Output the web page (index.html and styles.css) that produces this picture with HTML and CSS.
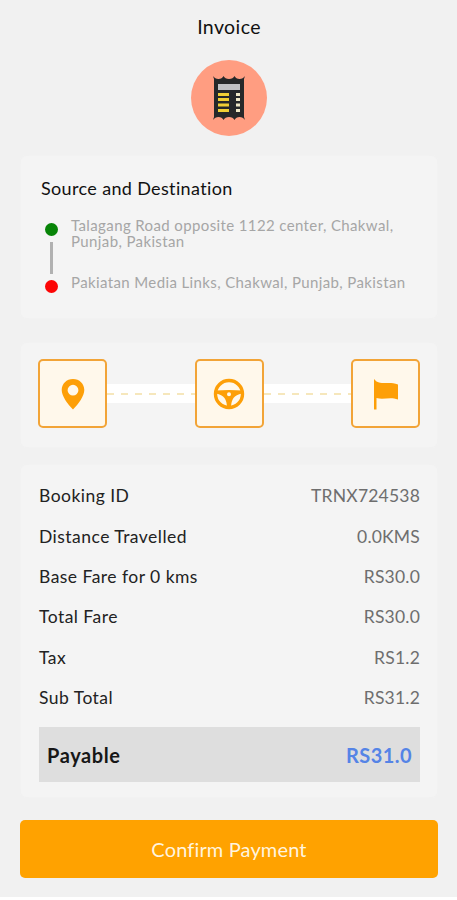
FILE: index.html
```html
<!DOCTYPE html>
<html lang="en">
<head>
<meta charset="utf-8">
<title>Invoice</title>
<link rel="stylesheet" href="styles.css">
</head>
<body>
<main class="screen">
  <h1 class="title">Invoice</h1>
  <div class="badge">
    <svg width="32" height="44" viewBox="0 0 32 44">
      <path fill="#25282a" d="M0 0 Q2 3 5.500 3 Q9 3 10.500 0 Q12 3 16 3 Q20 3 21.500 0 Q23 3 26.500 3 Q30 3 32 0 L31 3V41L32 44 Q30 41 26.500 41 Q23 41 21.500 44 Q20 41 16 41 Q12 41 10.500 44 Q9 41 5.500 41 Q2 41 0 44L1 41V3Z"/>
      <path fill="#bfc1c5" d="M5 8h22v6H5z"/>
      <path fill="#efcf35" d="M5 17h11v3H5zM5 22h11v3H5zM5 27.500h11v3H5zM5 33h11v3H5z"/>
      <path fill="#eee9c8" d="M23 17h4v3h-4zM23 22h4v3h-4zM23 27.500h4v3h-4zM23 33h4v3h-4z"/>
    </svg>
  </div>
  <section class="card route">
    <h2 class="heading">Source and Destination</h2>
    <div class="places">
      <div class="track"><i class="dot start"></i><i class="line"></i><i class="dot end"></i></div>
      <div class="addresses">
        <p class="address">Talagang Road opposite 1122 center, Chakwal,<br>Punjab, Pakistan</p>
        <p class="address">Pakiatan Media Links, Chakwal, Punjab, Pakistan</p>
      </div>
    </div>
  </section>
  <section class="card steps">
    <div class="step">
      <svg width="24" height="32" viewBox="0 0 24 32"><path fill="#fd9f08" fill-rule="evenodd" d="M12 1C5.500 1 .7 5.900.7 12 .7 18 6.500 26 12 31.500 17.500 26 23.300 18 23.300 12 23.300 5.900 18.500 1 12 1Zm0 5.800a5.400 5.400 0 1 1 0 10.800 5.400 5.400 0 0 1 0-10.800Z"/></svg>
    </div>
    <div class="link"><svg width="88" height="2"><path class="dash" d="M0 1H88"/></svg></div>
    <div class="step">
      <svg width="32" height="32" viewBox="0 0 32 32"><circle cx="16" cy="16" r="13.500" fill="none" stroke="#fd9f08" stroke-width="3.400"/><path fill="#fd9f08" fill-rule="evenodd" d="M3 12.500Q9 12 16 12T29 12.500V15.500Q23 16.500 20.500 20Q18.300 23 18 29H14Q13.700 23 11.500 20Q9 16.500 3 15.500ZM16 14.200a2 2 0 1 0 0 4 2 2 0 0 0 0-4Z"/></svg>
    </div>
    <div class="link"><svg width="88" height="2"><path class="dash" d="M0 1H88"/></svg></div>
    <div class="step">
      <svg width="26" height="32" viewBox="0 0 26 32"><path fill="#fd9f08" d="M1 1 3.500 3.500C10 7 16 3 25 6.500V21.500C17 18.500 11 22 3.500 20V31.500H1Z"/></svg>
    </div>
  </section>
  <section class="card bill">
    <dl class="rows">
      <div class="row"><dt>Booking ID</dt><dd>TRNX724538</dd></div>
      <div class="row"><dt>Distance Travelled</dt><dd>0.0KMS</dd></div>
      <div class="row"><dt>Base Fare for 0 kms</dt><dd>RS30.0</dd></div>
      <div class="row"><dt>Total Fare</dt><dd>RS30.0</dd></div>
      <div class="row"><dt>Tax</dt><dd>RS1.2</dd></div>
      <div class="row"><dt>Sub Total</dt><dd>RS31.2</dd></div>
    </dl>
    <div class="payable"><span>Payable</span><span class="amount">RS31.0</span></div>
  </section>
  <button class="confirm">Confirm Payment</button>
</main>
</body>
</html>
```
FILE: styles.css
```css
* { box-sizing: border-box; margin: 0; padding: 0; }
body { background: #fff; font-family: Lato, "Liberation Sans", sans-serif; }
.screen { height: 897px; background: #f1f1f1; display: flex; flex-direction: column; align-items: center; padding: 15px 0 0 1px; }
.title { font-size: 19.500px; line-height: 24px; font-weight: 400; letter-spacing: .4px; color: #111; }
.badge { width: 76px; height: 76px; margin-top: 21px; border-radius: 50%; background: #ff9d81; display: flex; align-items: center; justify-content: center; }
.card { width: 416px; background: #f4f4f4; border-radius: 6px; box-shadow: 0 0 4px #f2f2f2; }
.route { height: 162px; margin-top: 20px; padding: 20px; }
.heading { font-size: 18px; line-height: 24px; font-weight: 400; letter-spacing: .35px; color: #111; }
.places { display: flex; margin-top: 18px; }
.track { width: 26px; padding-top: 5px; display: flex; flex-direction: column; align-items: center; margin-left: -3px; }
.dot { width: 13px; height: 13px; border-radius: 50%; }
.start { background: #078407; }
.line { width: 3px; height: 32px; margin: 6px 0; background: #b1b1b1; }
.end { background: #fc0505; }
.addresses { margin-left: 7px; display: flex; flex-direction: column; gap: 26px; }
.address { font-size: 15px; line-height: 15.500px; letter-spacing: .38px; white-space: nowrap; color: #a6a6a6; }
.steps { height: 104px; margin-top: 25px; padding: 16px 17px 0 17px; display: flex; }
.step { width: 69px; height: 69px; border: 2px solid #f2a437; border-radius: 5px; background: #fff8eb; display: flex; align-items: center; justify-content: center; }
.link { flex: 1; height: 19px; margin-top: 25px; background: #fff; display: flex; align-items: center; }
.link svg { width: 100%; }
.dash { stroke: #f3dfa6; stroke-width: 1.500; stroke-dasharray: 7 7; }
.bill { height: 332px; margin-top: 18px; padding: 11px 17px 0 18px; }
.row { height: 40.400px; display: flex; align-items: center; justify-content: space-between; font-size: 17.500px; line-height: 24px; }
dt { color: #222; letter-spacing: .47px; }
dd { color: #6e6e6e; letter-spacing: .2px; }
.payable { height: 55px; margin-top: 9px; padding: 0 8px; background: #dedede; display: flex; align-items: center; justify-content: space-between; font-size: 20px; font-weight: 700; letter-spacing: .6px; color: #171717; }
.amount { color: #5584e6; letter-spacing: .45px; }
.confirm { width: 418px; height: 58px; margin-top: 23px; border: 0; border-radius: 5px; background: #ffa200; color: #fff4df; font: 400 20px Lato, sans-serif; letter-spacing: .15px; }
```
